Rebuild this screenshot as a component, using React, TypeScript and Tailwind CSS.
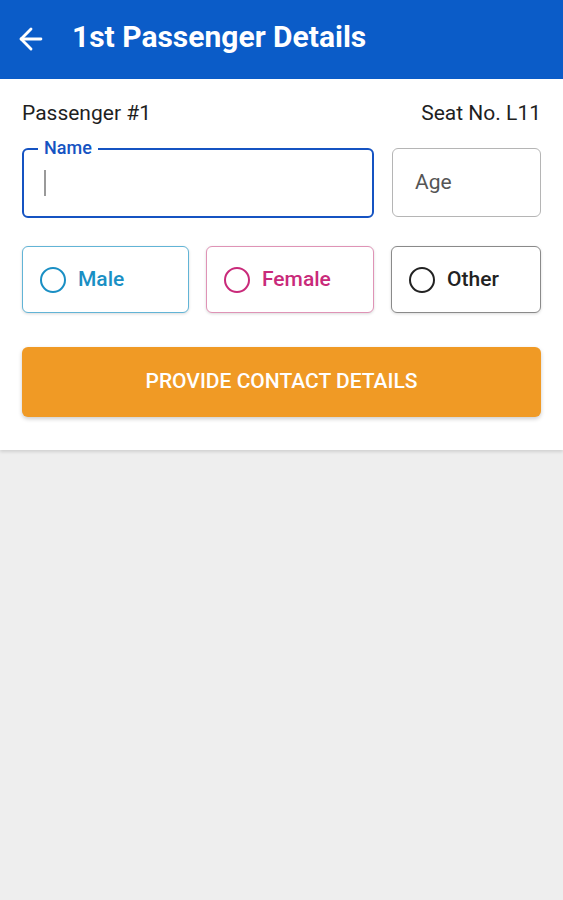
import { ArrowLeft } from 'lucide-react'

type Gender = {
  label: string
  border: string
  text: string
  ring: string
}

const genders: Gender[] = [
  { label: 'Male', border: 'border-[#62b4d6]', text: 'text-[#1a8fc4]', ring: 'border-[#1a8fc4]' },
  { label: 'Female', border: 'border-[#df93b6]', text: 'text-[#c92a7a]', ring: 'border-[#c92a7a]' },
  { label: 'Other', border: 'border-[#8a8a8a]', text: 'text-[#222222]', ring: 'border-[#222222]' },
]

const App = () => {
  return (
    <div className="min-h-[900px] bg-[#eeeeee] font-['Roboto',sans-serif]">
      <header className="flex h-[79px] items-center bg-[#0b5cc8] pb-[6px] pl-[14px] text-white">
        <ArrowLeft size={34} strokeWidth={2} className="mt-[5px]" />
        <h1 className="ml-[24px] text-[30px] font-bold leading-none">1st Passenger Details</h1>
      </header>

      <main className="bg-white px-[22px] pb-[33px] pt-[22px] shadow-[0_2px_3px_rgba(0,0,0,0.12)]">
        <div className="flex items-center justify-between text-[21px] leading-6 text-[#1f1f1f]">
          <span>Passenger #1</span>
          <span>Seat No. L11</span>
        </div>

        <div className="mt-[23px] flex gap-[18px]">
          <div className="relative h-[70px] flex-1 rounded-[6px] border-2 border-[#1553c2]">
            <span className="absolute -top-[12px] left-[14px] bg-white px-[6px] text-[18px] font-medium leading-5 text-[#1553c2]">
              Name
            </span>
            <div className="ml-[20px] mt-[20px] h-[26px] w-[2px] bg-[#9a9a9a]" />
          </div>
          <div className="flex h-[69px] w-[149px] items-center rounded-[6px] border border-[#b5b5b5] px-[22px] text-[21px] text-[#555555]">
            Age
          </div>
        </div>

        <div className="mt-[28px] grid grid-cols-[167px_168px_150px] gap-[17px]">
          {genders.map((g) => (
            <div
              key={g.label}
              className={`flex h-[67px] items-center rounded-[6px] border bg-white pl-[17px] shadow-[0_1px_3px_rgba(0,0,0,0.15)] ${g.border}`}
            >
              <span className={`h-[26px] w-[26px] rounded-full border-2 ${g.ring}`} />
              <span className={`ml-[12px] text-[21px] font-medium ${g.text}`}>{g.label}</span>
            </div>
          ))}
        </div>

        <button className="mt-[34px] flex h-[70px] w-full items-center justify-center rounded-[6px] bg-[#f09a25] text-[21px] font-medium uppercase text-white shadow-[0_2px_4px_rgba(0,0,0,0.2)]">
          Provide Contact Details
        </button>
      </main>
    </div>
  )
}

export default App
